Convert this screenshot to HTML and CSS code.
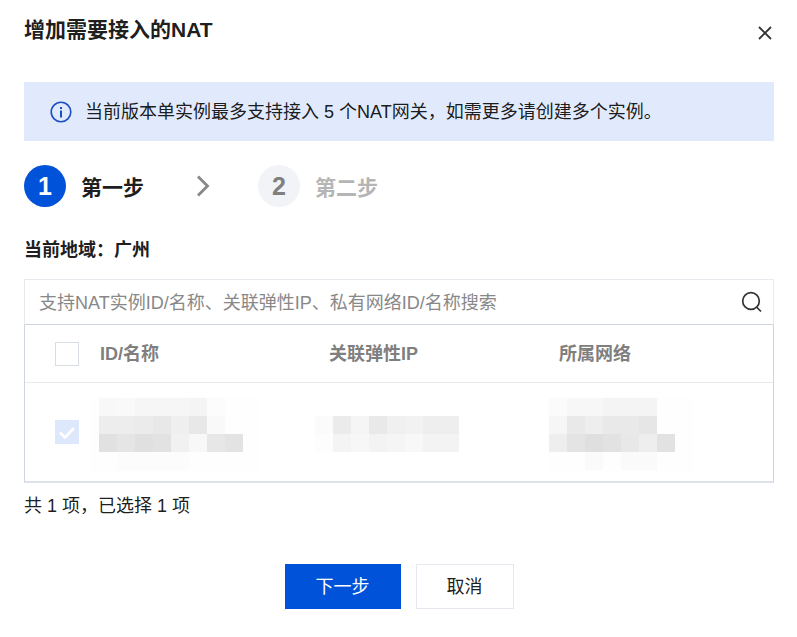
FILE: index.html
```html
<!DOCTYPE html>
<html lang="zh-CN">
<head>
<meta charset="utf-8">
<title>增加需要接入的NAT</title>
<link rel="stylesheet" href="styles.css">
</head>
<body>
<div class="dialog">
  <header class="dialog-head">
    <h1 class="dialog-title">增加需要接入的NAT</h1>
    <svg class="close" width="16" height="16" viewBox="0 0 16 16"><path d="M2 2 14 14M14 2 2 14" stroke="#333" stroke-width="1.8" fill="none"/></svg>
  </header>
  <div class="alert">
    <svg class="alert-icon" width="22" height="22" viewBox="0 0 22 22"><circle cx="11" cy="11" r="9.8" fill="none" stroke="#1b4fc4" stroke-width="1.6"/><rect x="10" y="9.5" width="2" height="7" fill="#1b4fc4"/><rect x="10" y="6" width="2" height="2" fill="#1b4fc4"/></svg>
    <span class="alert-text">当前版本单实例最多支持接入 5 个NAT网关，如需更多请创建多个实例。</span>
  </div>
  <div class="steps">
    <span class="step-num step-num-on">1</span>
    <span class="step-label">第一步</span>
    <svg class="step-arrow" width="14" height="22" viewBox="0 0 14 22"><path d="M2 1.500 11.500 11 2 20.500" fill="none" stroke="#888" stroke-width="2.800"/></svg>
    <span class="step-num">2</span>
    <span class="step-label step-label-off">第二步</span>
  </div>
  <div class="region">当前地域：广州</div>
  <div class="search">
    <span class="search-text">支持NAT实例ID/名称、关联弹性IP、私有网络ID/名称搜索</span>
    <svg width="22" height="22" viewBox="0 0 22 22"><circle cx="10" cy="10" r="8.300" fill="none" stroke="#333" stroke-width="1.700"/><path d="M15.500 16 20 20.500" stroke="#333" stroke-width="1.700"/></svg>
  </div>
  <div class="table">
    <div class="row row-head">
      <span class="check"></span>
      <span class="cell cell-id">ID/名称</span>
      <span class="cell cell-ip">关联弹性IP</span>
      <span class="cell">所属网络</span>
    </div>
    <div class="row row-body">
      <span class="check check-on"><svg width="24" height="24" viewBox="0 0 24 24"><path d="M5 12.500 10 17.500 19 8" fill="none" stroke="#fff" stroke-width="2.600"/></svg></span>
      <svg class="mosaic mosaic-id" width="170" height="90" viewBox="0 0 170 90">
        <rect x="1" y="7" width="169" height="76" fill="#fefefe"/>
        <rect x="9" y="8" width="18" height="18" fill="#f8f8f8"/><rect x="27" y="8" width="18" height="18" fill="#f9f9f9"/><rect x="45" y="8" width="18" height="18" fill="#f6f6f6"/><rect x="63" y="8" width="36" height="18" fill="#f6f6f6"/><rect x="99" y="8" width="18" height="18" fill="#f4f4f4"/><rect x="117" y="8" width="18" height="18" fill="#fcfcfc"/>
        <rect x="9" y="26" width="36" height="18" fill="#ededed"/><rect x="45" y="26" width="18" height="18" fill="#ebebeb"/><rect x="63" y="26" width="18" height="18" fill="#e8e8e8"/><rect x="81" y="26" width="18" height="18" fill="#efefef"/><rect x="99" y="26" width="18" height="18" fill="#e8e8e8"/><rect x="117" y="26" width="18" height="18" fill="#f9f9f9"/>
        <rect x="9" y="44" width="18" height="18" fill="#e1e1e1"/><rect x="27" y="44" width="18" height="18" fill="#e5e5e5"/><rect x="45" y="44" width="18" height="18" fill="#e0e0e0"/><rect x="63" y="44" width="18" height="18" fill="#e2e2e2"/><rect x="81" y="44" width="18" height="18" fill="#f1f1f1"/><rect x="99" y="44" width="18" height="18" fill="#f8f8f8"/><rect x="117" y="44" width="18" height="18" fill="#e7e7e7"/><rect x="135" y="44" width="18" height="18" fill="#e3e3e3"/>
        <rect x="27" y="62" width="72" height="18" fill="#fcfcfc"/>
      </svg>
      <svg class="mosaic mosaic-ip" width="144" height="90" viewBox="0 0 144 90">
        <rect x="0" y="26" width="18" height="18" fill="#fbfbfb"/><rect x="18" y="26" width="18" height="18" fill="#ebebeb"/><rect x="36" y="26" width="18" height="18" fill="#f5f5f5"/><rect x="54" y="26" width="18" height="18" fill="#e9e9e9"/><rect x="72" y="26" width="18" height="18" fill="#f0f0f0"/><rect x="90" y="26" width="18" height="18" fill="#f2f2f2"/><rect x="108" y="26" width="36" height="18" fill="#eeeeee"/>
        <rect x="0" y="44" width="18" height="18" fill="#fdfdfd"/><rect x="18" y="44" width="18" height="18" fill="#f4f4f4"/><rect x="36" y="44" width="18" height="18" fill="#f7f7f7"/><rect x="54" y="44" width="18" height="18" fill="#f3f3f3"/><rect x="72" y="44" width="18" height="18" fill="#f5f5f5"/><rect x="90" y="44" width="18" height="18" fill="#f8f8f8"/><rect x="108" y="44" width="36" height="18" fill="#f3f3f3"/>
      </svg>
      <svg class="mosaic mosaic-net" width="146" height="90" viewBox="0 0 146 90">
        <rect x="0" y="7" width="145" height="76" fill="#fefefe"/>
        <rect x="1" y="8" width="18" height="18" fill="#fbfbfb"/><rect x="19" y="8" width="36" height="18" fill="#f7f7f7"/><rect x="55" y="8" width="54" height="18" fill="#f4f4f4"/>
        <rect x="1" y="26" width="18" height="18" fill="#f6f6f6"/><rect x="19" y="26" width="18" height="18" fill="#e9e9e9"/><rect x="37" y="26" width="18" height="18" fill="#eeeeee"/><rect x="55" y="26" width="36" height="18" fill="#e9e9e9"/><rect x="91" y="26" width="18" height="18" fill="#e6e6e6"/>
        <rect x="1" y="44" width="18" height="18" fill="#eeeeee"/><rect x="19" y="44" width="18" height="18" fill="#e4e4e4"/><rect x="37" y="44" width="18" height="18" fill="#dfdfdf"/><rect x="55" y="44" width="18" height="18" fill="#e2e2e2"/><rect x="73" y="44" width="18" height="18" fill="#e8e8e8"/><rect x="91" y="44" width="18" height="18" fill="#eeeeee"/><rect x="109" y="44" width="18" height="18" fill="#e2e2e2"/>
        <rect x="37" y="62" width="18" height="18" fill="#fafafa"/><rect x="73" y="62" width="36" height="18" fill="#fafafa"/>
      </svg>
    </div>
  </div>
  <div class="summary">共 1 项，已选择 1 项</div>
  <div class="footer">
    <button class="btn btn-primary">下一步</button>
    <button class="btn">取消</button>
  </div>
</div>
</body>
</html>
```
FILE: styles.css
```css
* { box-sizing: border-box; }
html, body { margin: 0; padding: 0; background: #fff; }
body {
  width: 797px;
  height: 637px;
  overflow: hidden;
  font-family: "Liberation Sans", "Noto Sans CJK SC", sans-serif;
  font-size: 18px;
  color: rgba(0, 0, 0, 0.9);
}
.dialog { padding: 0 23px 0 24px; display: flex; flex-direction: column; }
.dialog-head { height: 82px; display: flex; justify-content: space-between; align-items: flex-start; }
.dialog-title { margin: 15px 0 0; font-size: 21px; line-height: 30px; font-weight: 700; }
.close { margin: 25px 1px 0 0; }
.alert {
  height: 59px;
  background: #e1eafc;
  display: flex;
  align-items: center;
  gap: 13px;
  padding-left: 26px;
}
.alert-icon { flex: none; }
.alert-text { padding-bottom: 4px; }
.steps { display: flex; align-items: center; height: 42px; margin-top: 24px; }
.step-num {
  width: 42px;
  height: 42px;
  border-radius: 50%;
  background: #f1f3f7;
  color: #7f7f7f;
  font-size: 25px;
  font-weight: 700;
  display: flex;
  align-items: center;
  justify-content: center;
}
.step-num-on { background: #0052d9; color: #fff; }
.step-label { margin-left: 15px; font-size: 21px; font-weight: 700; }
.step-label-off { color: #b5b5b5; }
.step-arrow { margin: 0 48px 0 52px; }
.region { margin-top: 30px; height: 26px; line-height: 26px; font-weight: 700; }
.search {
  margin-top: 16px;
  height: 46px;
  border: 1px solid #e7eaef;
  border-bottom-color: #cfd5de;
  display: flex;
  align-items: center;
  justify-content: space-between;
  padding: 0 10px 0 14px;
}
.search-text { color: #888; padding-bottom: 2px; }
.table {
  height: 158px;
  border: 1px solid #cfd5de;
  border-top: 0;
  border-bottom-width: 2px;
  border-bottom-color: #dde1e9;
}
.row { display: flex; align-items: center; padding-left: 30px; }
.row-head { height: 58px; border-bottom: 1px solid #e7eaef; color: #7f7f7f; font-weight: 700; }
.row-body { height: 98px; }
.check {
  flex: none;
  width: 24px;
  height: 24px;
  border: 1px solid #d8dce6;
  background: #fff;
}
.check svg { display: block; }
.check-on { border: 0; background: #dde8fc; }
.cell { display: block; padding-bottom: 3px; }
.row-head .check { margin-right: 21px; }
.cell-id { width: 229px; }
.cell-ip { width: 230px; }
.mosaic { flex: none; display: block; margin-top: 6px; }
.mosaic-id { margin-left: 11px; }
.mosaic-ip { margin-left: 55px; }
.mosaic-net { margin-left: 89px; }
.summary { margin-top: 10px; height: 26px; line-height: 26px; }
.footer { margin-top: 45px; display: flex; justify-content: center; gap: 15px; }
.btn {
  width: 98px;
  height: 45px;
  border: 1px solid #e7e8ef;
  background: #fff;
  color: rgba(0, 0, 0, 0.9);
  font: inherit;
  padding: 0 0 3px;
}
.btn-primary { width: 116px; background: #0052d9; border-color: #0052d9; color: #fff; }
```
